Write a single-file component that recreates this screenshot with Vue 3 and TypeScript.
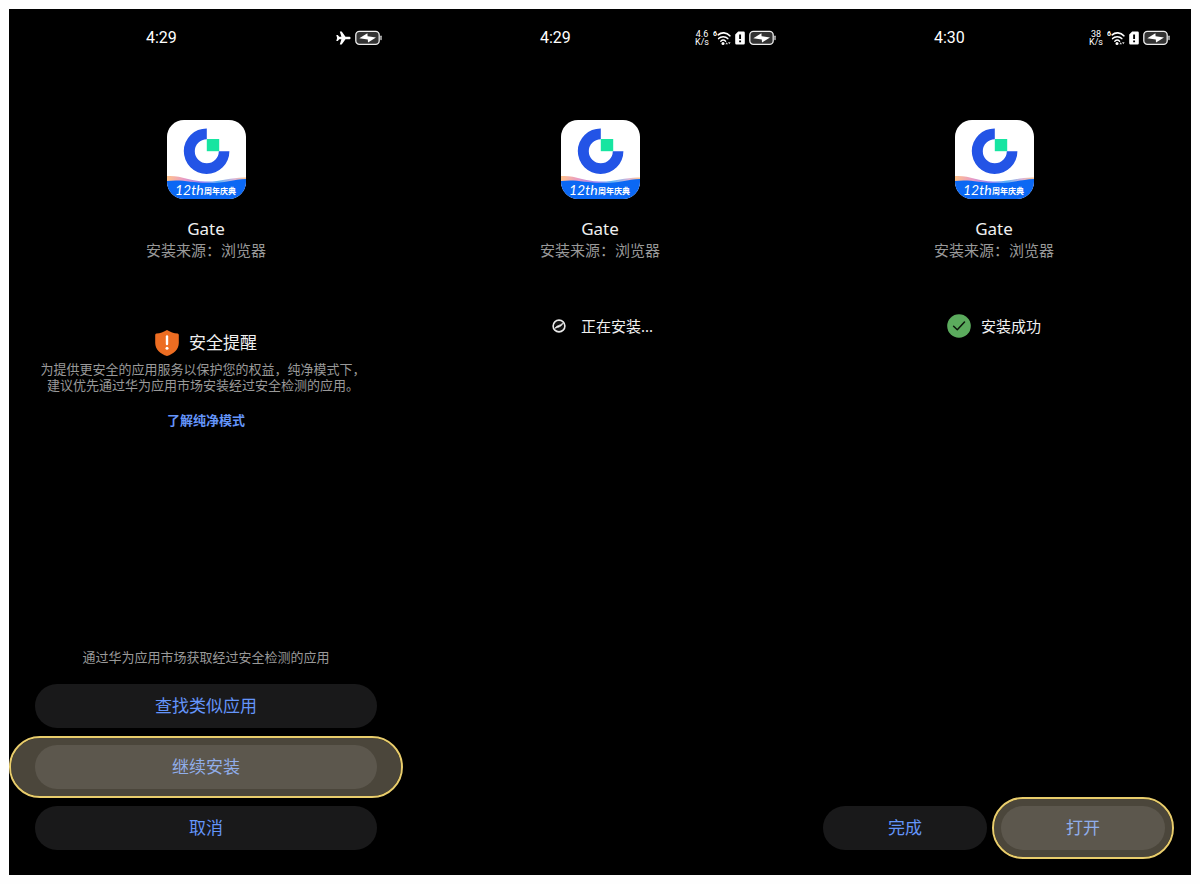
<script setup lang="ts">
type Stage = 'confirm' | 'installing' | 'done'

interface Screen {
  stage: Stage
  time: string
  speed: string | null
}

const screens: Screen[] = [
  { stage: 'confirm', time: '4:29', speed: null },
  { stage: 'installing', time: '4:29', speed: '4.6' },
  { stage: 'done', time: '4:30', speed: '38' },
]
</script>

<template>
  <main class="page">
    <div class="screens">
      <section v-for="screen in screens" :key="screen.stage" class="screen">
        <header class="status-bar">
          <time class="clock">{{ screen.time }}</time>
          <div class="indicators">
            <template v-if="screen.speed">
              <span class="speed">{{ screen.speed }}<br />K/s</span>
              <svg class="wifi" width="18" height="16" viewBox="0 0 18 16" aria-hidden="true">
                <text x="0" y="6" class="wifi-gen">6</text>
                <g fill="none" stroke="#fff" stroke-linecap="round">
                  <path d="M5.200 4.800C8.400 2 13.600 2.200 16.800 5.800" stroke-width="1.700" />
                  <path d="M5.600 8.600C8 6 12.400 6 14.800 8.600" stroke-width="1.500" />
                  <path d="M7.800 11.200C9.200 9.900 11.200 9.900 12.600 11.200" stroke-width="1.400" />
                </g>
                <circle cx="10" cy="13.400" r="1.500" fill="#fff" />
                <path d="M12.400 14.200l1.300-2 1.300 2zM15 12.200h2.600l-1.300 2z" fill="#ddd" />
              </svg>
              <svg class="sim" width="10" height="14" viewBox="0 0 10 14" aria-hidden="true">
                <path d="M3.200.6H8.600a1.200 1.200 0 0 1 1.200 1.200V12.200a1.200 1.200 0 0 1-1.200 1.200H1.400A1.200 1.200 0 0 1 .2 12.200V3.400z" fill="#fff" />
                <path d="M5.100 3.400V8M5.100 9.400v1.800" stroke="#000" stroke-width="1.900" />
              </svg>
            </template>
            <svg v-else class="plane" width="15" height="14" viewBox="0 0 15 14" aria-hidden="true">
              <path d="M14.600 7c0-.9-.8-1.300-1.600-1.300H9.500L5.700.4H3.800l1.600 5.300H3.200L1.800 4H.3L1.100 7 .3 10h1.500L3.200 8.300h2.200L3.800 13.600h1.900l3.800-5.300h3.500c.8 0 1.600-.4 1.600-1.300z" fill="#fff" />
            </svg>
            <svg width="27" height="16" viewBox="0 0 27 16" aria-hidden="true">
              <rect x=".8" y="1.300" width="23.400" height="13" rx="3.600" fill="#333" stroke="#eee" stroke-width="1.300" />
              <path d="M4.300 8.200L12.400 3.200L12.600 6.200L21 7.500L13 12.600L12.800 9.400z" fill="#fff" />
              <path d="M26 6.200v3.400" stroke="#ddd" stroke-width="1.300" stroke-linecap="round" />
            </svg>
          </div>
        </header>

        <svg class="app-icon" viewBox="0 0 79 79" role="img" aria-label="Gate">
          <defs>
            <clipPath :id="`tile-${screen.stage}`"><rect width="79" height="79" rx="17" /></clipPath>
            <linearGradient :id="`ribbon-${screen.stage}`" x1="0" x2="1" y1="0" y2="0">
              <stop offset="0" stop-color="#ffc48c" />
              <stop offset=".22" stop-color="#e99ac4" />
              <stop offset=".45" stop-color="#8c7df2" />
              <stop offset=".65" stop-color="#5cb3f7" />
              <stop offset=".85" stop-color="#d8b4d8" />
              <stop offset="1" stop-color="#ffc48c" />
            </linearGradient>
          </defs>
          <g :clip-path="`url(#tile-${screen.stage})`">
            <rect width="79" height="79" fill="#fff" />
            <path d="M39.800 8.400A22.800 22.800 0 1 0 62.400 31.200H51.800A12 12 0 1 1 39.800 19.200z" fill="#2354e6" />
            <rect x="39.800" y="19" width="12.400" height="12.200" fill="#17e5a1" />
            <path d="M0 56C14 55 23 61 38 61.500C54 62 64 57 79 57.500V66H0z" :fill="`url(#ribbon-${screen.stage})`" />
            <path d="M0 61C14 59 24 62.500 40 63C56 63.500 66 59.500 79 59V79H0z" fill="#0b68f4" />
            <text x="8" y="75" class="anniversary-number">12th</text>
            <text x="37" y="74" class="anniversary-label">周年庆典</text>
          </g>
        </svg>
        <h1 class="app-name">Gate</h1>
        <p class="source">安装来源：浏览器</p>

        <template v-if="screen.stage === 'confirm'">
          <div class="notice-title">
            <svg width="24" height="26" viewBox="0 0 24 26" aria-hidden="true">
              <path d="M12 0C15 2 19 3.200 22.600 3.600Q23.800 3.800 23.800 5V13C23.800 19.500 18.500 24 12 26C5.500 24 .2 19.500 .2 13V5Q.2 3.800 1.400 3.600C5 3.200 9 2 12 0z" fill="#ed6d22" />
              <path d="M12 6.500V14" stroke="#fff" stroke-width="2.400" stroke-linecap="round" />
              <circle cx="12" cy="18.200" r="1.500" fill="#fff" />
            </svg>
            <h2>安全提醒</h2>
          </div>
          <p class="notice">
            为提供更安全的应用服务以保护您的权益，纯净模式下，<br />建议优先通过华为应用市场安装经过安全检测的应用。
          </p>
          <a class="learn-more" href="#">了解纯净模式</a>
          <div class="actions stacked">
            <p class="hint">通过华为应用市场获取经过安全检测的应用</p>
            <button type="button" class="action">查找类似应用</button>
            <button type="button" class="action highlighted wide">继续安装</button>
            <button type="button" class="action">取消</button>
          </div>
        </template>

        <div v-else-if="screen.stage === 'installing'" class="progress" role="status">
          <svg width="24" height="24" viewBox="0 0 24 24" aria-hidden="true">
            <circle cx="12" cy="12" r="5.900" fill="#111" stroke="#e8e8e8" stroke-width="1.600" />
            <path d="M8 14.200C9.500 11.400 13 11.600 15.800 9.200C15 12.700 11 13.200 8 14.200z" fill="#fff" stroke="#ddd" stroke-width=".8" />
          </svg>
          <span>正在安装...</span>
        </div>

        <template v-else>
          <div class="progress" role="status">
            <svg width="24" height="24" viewBox="0 0 24 24" aria-hidden="true">
              <circle cx="12" cy="12" r="11.800" fill="#5bab5d" />
              <path d="M6.600 12.200L10.300 15.800L17.500 8" fill="none" stroke="#0b160b" stroke-width="1.500" stroke-linecap="round" stroke-linejoin="round" />
            </svg>
            <span>安装成功</span>
          </div>
          <div class="actions paired">
            <button type="button" class="action">完成</button>
            <button type="button" class="action highlighted">打开</button>
          </div>
        </template>
      </section>
    </div>
  </main>
</template>

<style>
body {
  margin: 0;
  background: #fefefe;
}
</style>

<style scoped>
.page {
  box-sizing: border-box;
  display: flex;
  min-height: 100vh;
  padding: 9px;
  font-family: "Noto Sans", "Noto Sans CJK SC", sans-serif;
}

.screens {
  flex: 1;
  display: grid;
  grid-template-columns: repeat(3, minmax(0, 1fr));
  background: #000;
}

.screen {
  box-sizing: border-box;
  display: flex;
  flex-direction: column;
  align-items: center;
  padding-bottom: 25px;
  color: #f0f0f0;
}

.status-bar {
  box-sizing: border-box;
  width: 100%;
  height: 58px;
  padding: 0 21px 0 137px;
  display: flex;
  align-items: center;
  justify-content: space-between;
}

.clock {
  font: 16px/20px Roboto, sans-serif;
  color: #fff;
}

.indicators {
  display: flex;
  align-items: center;
  gap: 4px;
}

.speed {
  font: 9px/8px Roboto, sans-serif;
  text-align: center;
  color: #fff;
}

.wifi-gen {
  font: 700 7px Roboto, sans-serif;
  fill: #fff;
}

.app-icon {
  display: block;
  width: 79px;
  height: 79px;
  margin-top: 53px;
}

.anniversary-number {
  font: italic 400 14px Lato, sans-serif;
  fill: #fff;
}

.anniversary-label {
  font: 700 8px "Noto Sans CJK SC", sans-serif;
  fill: #fff;
}

h1,
h2,
p {
  margin: 0;
  font-weight: 400;
}

.app-name {
  margin-top: 18px;
  font-size: 17px;
  line-height: 24px;
}

.source {
  font-size: 15px;
  line-height: 18px;
  color: #999;
}

.notice-title {
  display: flex;
  align-items: center;
  gap: 10px;
  margin-top: 71px;
}

.notice-title h2 {
  font-size: 17px;
  line-height: 26px;
}

.notice {
  margin-top: 5px;
  padding-right: 6px;
  font-size: 13px;
  line-height: 16px;
  text-align: center;
  color: #999;
}

.learn-more {
  margin-top: 17px;
  font-size: 13px;
  font-weight: 700;
  line-height: 20px;
  color: #6495fa;
  text-decoration: none;
}

.progress {
  display: flex;
  align-items: center;
  gap: 10px;
  margin-top: 55px;
  font-size: 15px;
  line-height: 24px;
}

.actions {
  box-sizing: border-box;
  width: 100%;
  margin-top: auto;
  padding: 0 26px;
  display: flex;
}

.stacked {
  flex-direction: column;
  gap: 17px;
}

.paired {
  gap: 14px;
}

.hint {
  font-size: 13px;
  line-height: 20px;
  text-align: center;
  color: #999;
}

.action {
  position: relative;
  flex: 1 1 auto;
  height: 44px;
  padding: 0;
  border: 0;
  border-radius: 22px;
  background: #19191a;
  color: #6495fa;
  font-family: inherit;
  font-size: 17px;
  line-height: 24px;
  cursor: pointer;
}

.stacked .action {
  flex: none;
}

.highlighted::after {
  content: "";
  position: absolute;
  inset: -9px;
  border: 2px solid #e9cd6c;
  border-radius: 31px;
  background: rgba(250, 232, 195, 0.3);
  background-clip: padding-box;
  pointer-events: none;
}

.wide::after {
  inset: -9px -26px;
}
</style>
